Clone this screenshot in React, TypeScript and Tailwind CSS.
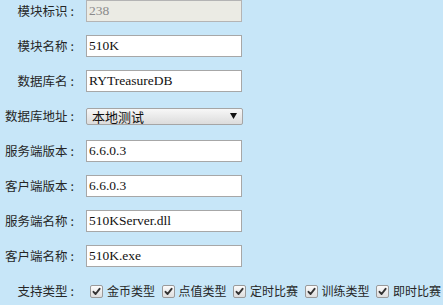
import React from "react";

const cjk = { fontFamily: '"Noto Sans CJK SC", "Noto Sans", sans-serif' };
const serif = { fontFamily: '"Liberation Serif", "Noto Sans CJK SC", serif' };

function Label({ children }: { children: React.ReactNode }) {
  return (
    <div className="w-[74px] shrink-0 whitespace-nowrap text-right text-[12.5px] leading-none text-[#262626]" style={cjk}>
      {children}
      <span className="ml-[3px]">:</span>
    </div>
  );
}

function TextRow({ label, value, disabled }: { label: string; value: string; disabled?: boolean }) {
  return (
    <div className="flex h-[22px] items-center">
      <Label>{label}</Label>
      <div
        className={
          "ml-[12px] flex h-[22px] w-[156px] shrink-0 items-center border pl-[2px] text-[13.5px] leading-none " +
          (disabled ? "border-[#b4b4b4] bg-[#ebebe4] text-[#8a8a8a]" : "border-[#a7a7a7] bg-white text-[#111]")
        }
        style={serif}
      >
        {value}
      </div>
    </div>
  );
}

function Check({ label }: { label: string }) {
  return (
    <div className="flex shrink-0 items-center">
      <span className="flex h-[13px] w-[13px] shrink-0 items-center justify-center rounded-[2px] border border-[#9a9a9a] bg-gradient-to-b from-[#fbfbfb] to-[#dedede]">
        <svg width="9" height="9" viewBox="0 0 9 9">
          <path d="M1.5 4.8 L3.6 7 L7.6 1.8" fill="none" stroke="#333" strokeWidth="1.9" strokeLinecap="round" strokeLinejoin="round" />
        </svg>
      </span>
      <span className="ml-[4px] mr-[6.5px] whitespace-nowrap text-[12px] leading-none text-[#262626]" style={cjk}>
        {label}
      </span>
    </div>
  );
}

export default function App() {
  return (
    <div className="h-[305px] w-[443px] overflow-hidden bg-[#c7e6f8]">
      <div className="flex flex-col gap-[13px]">
        <TextRow label="模块标识" value="238" disabled />
        <TextRow label="模块名称" value="510K" />
        <TextRow label="数据库名" value="RYTreasureDB" />
        <div className="flex h-[22px] items-center">
          <Label>数据库地址</Label>
          <div className="ml-[12px] flex h-[17px] w-[157px] shrink-0 items-center justify-between rounded-[2px] border border-[#a5a5a5] bg-gradient-to-b from-[#f7f7f7] to-[#dcdcdc] pl-[5px] pr-[5px]">
            <span className="text-[13px] leading-none text-[#111]" style={cjk}>
              本地测试
            </span>
            <svg width="7" height="6" viewBox="0 0 7 6">
              <path d="M0 0 H7 L3.5 6 Z" fill="#111" />
            </svg>
          </div>
        </div>
        <TextRow label="服务端版本" value="6.6.0.3" />
        <TextRow label="客户端版本" value="6.6.0.3" />
        <TextRow label="服务端名称" value="510KServer.dll" />
        <TextRow label="客户端名称" value="510K.exe" />
        <div className="flex h-[22px] items-center">
          <Label>支持类型</Label>
          <div className="ml-[16px] flex items-center">
            <Check label="金币类型" />
            <Check label="点值类型" />
            <Check label="定时比赛" />
            <Check label="训练类型" />
            <Check label="即时比赛" />
          </div>
        </div>
      </div>
    </div>
  );
}
